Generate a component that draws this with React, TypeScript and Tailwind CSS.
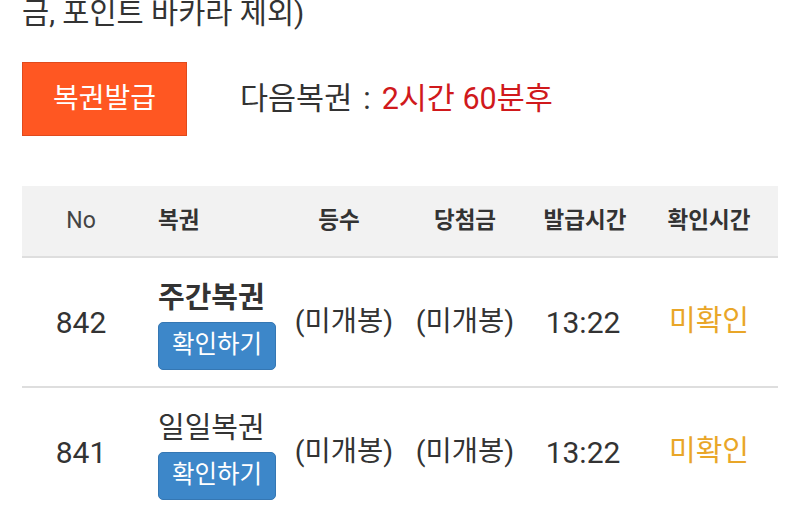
import React from 'react'

interface Ticket {
  no: number
  name: string
  highlight: boolean
  rank: string
  prize: string
  issuedAt: string
  checked: string
}

const tickets: Ticket[] = [
  { no: 842, name: '주간복권', highlight: true, rank: '(미개봉)', prize: '(미개봉)', issuedAt: '13:22', checked: '미확인' },
  { no: 841, name: '일일복권', highlight: false, rank: '(미개봉)', prize: '(미개봉)', issuedAt: '13:22', checked: '미확인' },
]

const cols = 'grid grid-cols-[118px_148px_112px_130px_110px_138px]'

const App: React.FC = () => {
  return (
    <div
      className="w-[800px] h-[505px] overflow-hidden bg-white text-[#333]"
      style={{ fontFamily: 'Roboto, "Noto Sans CJK KR", "Noto Sans", sans-serif' }}
    >
      <div className="px-[22px]">
        <p className="-mt-[7px] text-[29.5px] leading-[40px] text-[#333] whitespace-nowrap">금, 포인트 바카라 제외)</p>

        <div className="mt-[29px] flex items-center">
          <button className="w-[165px] h-[74px] bg-[#ff5722] border border-[#e04a1c] text-white text-[28px]">
            복권발급
          </button>
          <div className="ml-[53px] text-[30.5px] leading-none flex items-center">
            <span className="text-[#333]">다음복권</span>
            <span className="mx-[11px] text-[#333]">:</span>
            <span className="text-[#d0191c]">2시간 60분후</span>
          </div>
        </div>

        <div className="mt-[50px] w-[756px]">
          <div className={`${cols} h-[72px] items-center bg-[#f2f2f2] border-b-2 border-[#dedede] text-[22.5px]`}>
            <div className="text-center text-[23px] text-[#444]">No</div>
            <div className="pl-[18px] font-bold text-[#333]">복권</div>
            <div className="text-center pr-[10px] font-bold text-[#333]">등수</div>
            <div className="text-center font-bold text-[#333]">당첨금</div>
            <div className="text-center font-bold text-[#333]">발급시간</div>
            <div className="text-center font-bold text-[#333]">확인시간</div>
          </div>

          {tickets.map((t) => (
            <div key={t.no} className={`${cols} h-[130px] items-center border-b-2 border-[#dedede] text-[28.5px]`}>
              <div className="text-center text-[30px]">{t.no}</div>
              <div className="pl-[18px] pt-[5px] flex flex-col items-start">
                <span className={`text-[29px] leading-[36px] whitespace-nowrap ${t.highlight ? 'font-bold' : ''}`}>{t.name}</span>
                <button className="mt-[6px] w-[118px] h-[48px] rounded-[5px] bg-[#3d87c9] border border-[#3577b3] text-white text-[24.5px] leading-none">
                  확인하기
                </button>
              </div>
              <div className="text-center whitespace-nowrap">{t.rank}</div>
              <div className="text-center whitespace-nowrap">{t.prize}</div>
              <div className="text-center pr-[4px] text-[30px]">{t.issuedAt}</div>
              <div className="text-center text-[29px] text-[#e9a628]">{t.checked}</div>
            </div>
          ))}
        </div>
      </div>
    </div>
  )
}

export default App
